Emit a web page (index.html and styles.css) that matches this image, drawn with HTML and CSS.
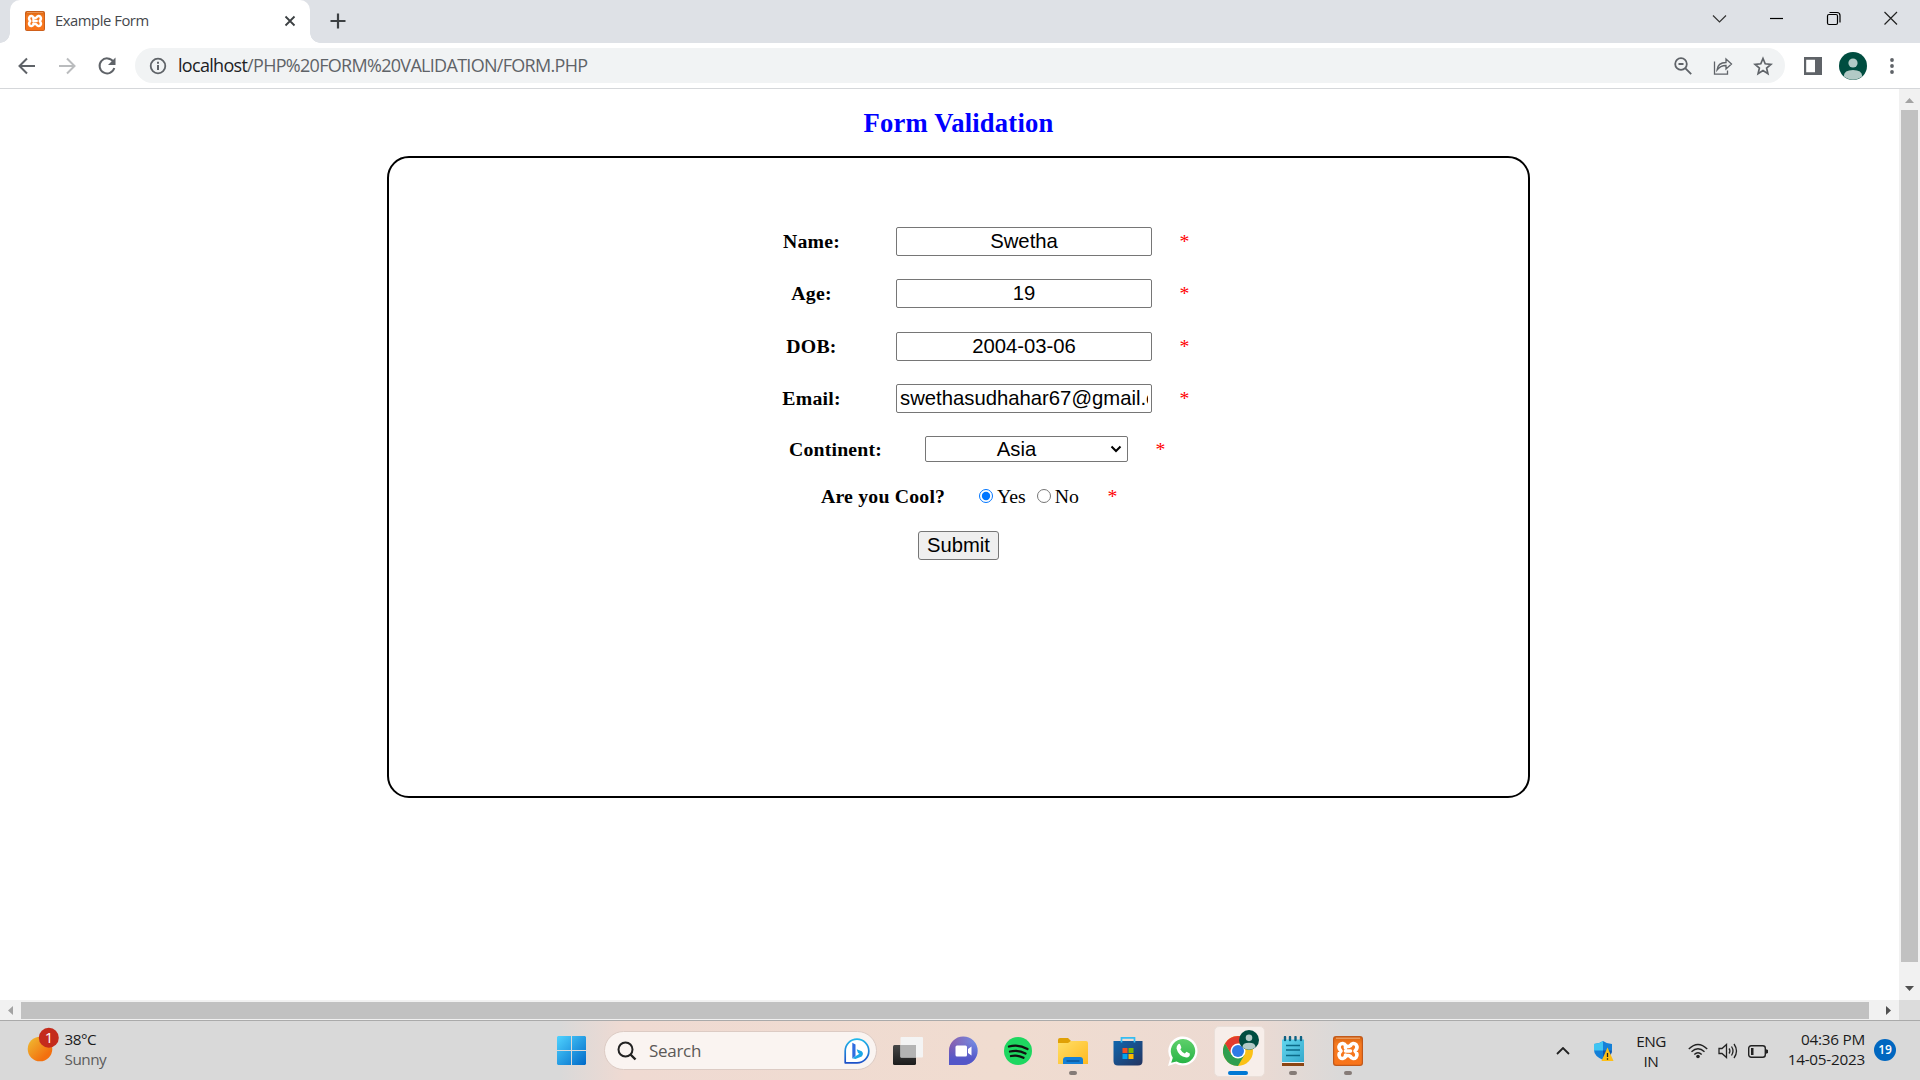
FILE: index.html
```html
<!DOCTYPE html>
<html lang="en">
<head>
<meta charset="utf-8">
<title>Example Form</title>
<link rel="stylesheet" href="styles.css">
</head>
<body>
<svg width="0" height="0" class="defs">
  <defs>
    <linearGradient id="orange" x1="0" y1="0" x2="0" y2="1"><stop offset="0" stop-color="#d9640f"/><stop offset=".25" stop-color="#f57a21"/><stop offset="1" stop-color="#f9741a"/></linearGradient>
    <linearGradient id="win" x1="0" y1="0" x2="1" y2="1"><stop offset="0" stop-color="#4fd3ff"/><stop offset="1" stop-color="#0069c8"/></linearGradient>
    <linearGradient id="sun" x1="0" y1="0" x2="1" y2="1"><stop offset=".1" stop-color="#efb52f"/><stop offset=".75" stop-color="#f3700f"/></linearGradient>
    <linearGradient id="bing" x1="0" y1="0" x2="0" y2="1"><stop offset="0" stop-color="#22b8ea"/><stop offset="1" stop-color="#1c50c8"/></linearGradient>
    <linearGradient id="dark" x1="0" y1="0" x2="0" y2="1"><stop offset="0" stop-color="#484848"/><stop offset="1" stop-color="#1c1c1c"/></linearGradient>
    <linearGradient id="chat" x1="0" y1="0" x2="1" y2="0"><stop offset="0" stop-color="#8b5caa"/><stop offset="1" stop-color="#6f8fe8"/></linearGradient>
    <linearGradient id="chat2" x1="0" y1="0" x2="0" y2="1"><stop offset=".2" stop-color="#5457c8" stop-opacity="0"/><stop offset=".8" stop-color="#5457c8"/></linearGradient>
    <linearGradient id="folder" x1="0" y1="0" x2="1" y2="1"><stop offset="0" stop-color="#ffdf68"/><stop offset="1" stop-color="#ffb91f"/></linearGradient>
    <linearGradient id="store" x1="0" y1="0" x2="1" y2="1"><stop offset="0" stop-color="#0f66ae"/><stop offset="1" stop-color="#243460"/></linearGradient>
    <linearGradient id="wa" x1="0" y1="0" x2="0" y2="1"><stop offset="0" stop-color="#5fd06b"/><stop offset="1" stop-color="#28b446"/></linearGradient>
    <linearGradient id="note" x1="0" y1="0" x2="1" y2="1"><stop offset="0" stop-color="#62d6ee"/><stop offset="1" stop-color="#36a9cc"/></linearGradient>
    <symbol id="xampp" viewBox="0 0 30 30"><rect width="30" height="30" rx="3" fill="#c2591a"/><rect x="1.2" y="1.2" width="27.6" height="27.6" rx="2" fill="url(#orange)"/><path d="M3 2.2h24" stroke="#eeb07f" stroke-width="1"/><path d="M12.500 12V9.500C11.500 7 8.500 7 7 8.500 5.500 10.500 6 13 8 15c-2 2-2.500 4.500-1 6.500 1.500 1.500 4.500 1.500 5.500-1V19M12.500 9.500Q15 11.500 17.500 9.500C18.500 7 21.500 7 23 8.500c1.500 2 1 4.500-1 6.500 2 2 2.500 4.500 1 6.500-1.500 1.500-4.500 1.500-5.500-1Q15 18.500 12.500 20.500M12.500 15h5" fill="none" stroke="#fff" stroke-width="3.600" stroke-linejoin="round" stroke-linecap="round"/></symbol>
    <symbol id="person" viewBox="0 0 28 28"><circle cx="14" cy="14" r="14" fill="#004d40"/><circle cx="14" cy="11" r="4.600" fill="#b2cac6"/><path d="M4.800 24.200Q5 18 14 18t9.200 6.200A14 14 0 0 1 4.800 24.200Z" fill="#b2cac6"/></symbol>
  </defs>
</svg>

<header class="tabstrip">
  <div class="tab">
    <svg class="favicon" width="20" height="20"><use href="#xampp"/></svg>
    <span class="tab-title">Example Form</span>
    <svg class="tab-close" width="12" height="12" viewBox="0 0 12 12"><path d="M1.500 1.500l9 9m0-9l-9 9" stroke="#3c4043" stroke-width="1.800"/></svg>
  </div>
  <svg class="new-tab" width="16" height="16" viewBox="0 0 16 16"><path d="M8 .5v15M.5 8h15" stroke="#3c4043" stroke-width="2.200"/></svg>
  <div class="window-controls">
    <svg width="57" height="36" viewBox="0 0 57 36"><path d="M22 15.500l6.500 6.500 6.500-6.500" fill="none" stroke="#333" stroke-width="1.200"/></svg>
    <svg width="57" height="36" viewBox="0 0 57 36"><path d="M22 18.500h13" stroke="#000" stroke-width="1.200"/></svg>
    <svg width="57" height="36" viewBox="0 0 57 36"><rect x="22.500" y="14.500" width="10" height="10" rx="1.500" fill="none" stroke="#000" stroke-width="1.200"/><path d="M24.500 12.500h7.500a3 3 0 0 1 3 3v7" fill="none" stroke="#000" stroke-width="1.200"/></svg>
    <svg width="57" height="36" viewBox="0 0 57 36"><path d="M22.500 12l12.500 12.500m0-12.500l-12.500 12.500" stroke="#222" stroke-width="1.200"/></svg>
  </div>
</header>

<nav class="toolbar">
  <div class="nav-buttons">
    <svg width="40" height="40" viewBox="0 0 40 40"><path d="M28 20H13m7-7.500L12.500 20l7.500 7.500" fill="none" stroke="#5f6368" stroke-width="2"/></svg>
    <svg width="40" height="40" viewBox="0 0 40 40"><path d="M12 20h15m-7-7.500l7.500 7.500-7.500 7.500" fill="none" stroke="#babcbe" stroke-width="2"/></svg>
    <svg width="40" height="40" viewBox="0 0 40 40"><path d="M26.200 15.500A7.500 7.500 0 1 0 27.300 22" fill="none" stroke="#5f6368" stroke-width="2"/><path d="M28.500 11.500v7.500h-7.500z" fill="#5f6368"/></svg>
  </div>
  <div class="omnibox">
    <svg width="18" height="18" viewBox="0 0 18 18"><circle cx="9" cy="9" r="7.300" fill="none" stroke="#5f6368" stroke-width="1.800"/><path d="M9 8v5M9 4.800v2" stroke="#5f6368" stroke-width="2"/></svg>
    <span class="url"><b>localhost</b>/PHP%20FORM%20VALIDATION/FORM.PHP</span>
    <span class="page-actions">
      <svg width="40" height="36" viewBox="0 0 40 36"><circle cx="18" cy="16" r="5.800" fill="none" stroke="#5f6368" stroke-width="1.800"/><path d="M15.500 16h5M22.200 20.200l6 6" stroke="#5f6368" stroke-width="1.800"/></svg>
      <svg width="40" height="36" viewBox="0 0 40 36"><path d="M11.500 13.500v12.700h13v-3.700M14 22c.5-5 4-7.500 9-7.500V11l5.500 5-5.500 5v-3.500c-4 0-6.500 1-9 4.500z" fill="none" stroke="#5f6368" stroke-width="1.300"/></svg>
      <svg width="40" height="36" viewBox="0 0 40 36"><path d="M20 10.500l2.200 5.300 5.700.5-4.300 3.700 1.300 5.600-4.900-3-4.900 3 1.300-5.600-4.300-3.700 5.700-.5z" fill="none" stroke="#5f6368" stroke-width="1.700"/></svg>
    </span>
  </div>
  <div class="browser-actions">
    <svg width="18" height="18" viewBox="0 0 18 18"><path fill="#5f6368" fill-rule="evenodd" d="M0 0h18v18H0zM2.200 2.800v12.400H11V2.800z"/></svg>
    <svg width="28" height="28"><use href="#person"/></svg>
    <svg width="6" height="18" viewBox="0 0 6 18"><g fill="#5f6368"><circle cx="3" cy="3" r="1.900"/><circle cx="3" cy="9" r="1.900"/><circle cx="3" cy="15" r="1.900"/></g></svg>
  </div>
</nav>

<div class="viewport">
  <main class="page">
    <h1>Form Validation</h1>
    <form class="card">
      <div class="row"><label>Name:</label><input class="field" value="Swetha"><span class="star">*</span></div>
      <div class="row"><label>Age:</label><input class="field" value="19"><span class="star">*</span></div>
      <div class="row"><label>DOB:</label><input class="field" value="2004-03-06"><span class="star">*</span></div>
      <div class="row"><label>Email:</label><input class="field" value="swethasudhahar67@gmail.com"><span class="star">*</span></div>
      <div class="row continent"><label>Continent:</label><div class="select"><select class="field"><option>Asia</option></select><svg width="12" height="8" viewBox="0 0 12 8"><path d="M1.500 1.500L6 6l4.500-4.500" fill="none" stroke="#000" stroke-width="2"/></svg></div><span class="star">*</span></div>
      <div class="row cool"><label>Are you Cool?</label><input type="radio" name="cool" checked><span class="yes">Yes</span><input type="radio" name="cool"><span>No</span><span class="star">*</span></div>
      <button class="submit" type="button">Submit</button>
    </form>
  </main>
  <div class="vbar">
    <svg width="21" height="21" viewBox="0 0 21 21"><path d="M6 14l4.500-5 4.500 5z" fill="#a3a3a3"/></svg>
    <div class="vthumb"></div>
    <svg class="end" width="21" height="21" viewBox="0 0 21 21"><path d="M6 7l4.500 5 4.500-5z" fill="#505050"/></svg>
  </div>
  <div class="hbar">
    <svg width="21" height="20" viewBox="0 0 21 20"><path d="M13 6v9l-5-4.500z" fill="#a3a3a3"/></svg>
    <div class="hthumb"></div>
    <svg class="end" width="21" height="20" viewBox="0 0 21 20"><path d="M8 6v9l5-4.500z" fill="#505050"/></svg>
  </div>
  <div class="corner"></div>
</div>

<footer class="taskbar">
  <div class="weather">
    <svg width="34" height="36" viewBox="0 0 34 36"><circle cx="15" cy="22" r="12.300" fill="url(#sun)"/><circle cx="23.800" cy="10.800" r="10" fill="#c42b1c"/><text x="24" y="16" class="badge-text">1</text></svg>
    <div class="weather-text"><span>38°C</span><span class="muted">Sunny</span></div>
  </div>
  <div class="apps">
    <svg class="start" width="29" height="29" viewBox="0 0 29 29"><path fill="url(#win)" d="M1 0h13v14H0V1zM15 0h13l1 1v13H15zM0 15h14v14H1l-1-1zM15 15h14v13l-1 1H15z"/></svg>
    <div class="search">
      <svg width="20" height="20" viewBox="0 0 20 20"><circle cx="8.500" cy="8.500" r="7" fill="none" stroke="#222" stroke-width="2"/><path d="M13.500 13.500l5 5" stroke="#222" stroke-width="2.400"/></svg>
      <span class="search-text">Search</span>
      <svg class="bing" width="26" height="26" viewBox="0 0 26 26"><path d="M1.200 24.800V13A11.800 11.800 0 1 1 13 24.800z" fill="#fff" stroke="url(#bing)" stroke-width="1.700" stroke-linejoin="round"/><path d="M8.300 4.800l3.200 1.600V18l-3.200 2.400z" fill="#2f6de0"/><path d="M11.500 18.200l4-2.400-1.500-.8-1.300-3.700 5 2q2.500 2.500 0 5.200l-6.300 2.500-3.100-.8z" fill="#1aa7e6"/></svg>
    </div>
    <div class="app"><svg width="30" height="30" viewBox="0 0 30 30"><rect x="0" y="9" width="23" height="20" rx="1.500" fill="url(#dark)"/><rect x="7.500" y="1" width="22.500" height="20.500" rx="1" fill="#f4f4f4"/><path d="M7.500 9H23v12.500H7.500z" fill="#b4b4b4"/></svg></div>
    <div class="app"><svg width="30" height="30" viewBox="0 0 30 30"><path d="M1 29V15A14.300 14.300 0 1 1 15 29z" fill="url(#chat)"/><path d="M1 29V15A14.300 14.300 0 1 1 15 29z" fill="url(#chat2)"/><rect x="7.500" y="9.500" width="11.500" height="11" rx="1.500" fill="#fff"/><path d="M20 13l3.500-2.500v9L20 17z" fill="#fff"/></svg></div>
    <div class="app"><svg width="30" height="30" viewBox="0 0 30 30"><circle cx="15" cy="15" r="14" fill="#1ed760"/><path d="M6 10.500q9.500-2.500 18.500 2.500M7 15.500q8-2 15.500 2M8 20q6.500-1.500 12.500 1.800" fill="none" stroke="#111" stroke-width="2.300" stroke-linecap="round"/></svg></div>
    <div class="app open"><svg width="30" height="30" viewBox="0 0 30 30"><path d="M0 4q0-2 2-2h8l3 3-2 4H0z" fill="#e0a006"/><path d="M0 7h10l3-2h15q2 0 2 2v21H0z" fill="url(#folder)"/><path d="M5 28v-4q0-3 3-3h14q3 0 3 3v4z" fill="#1480d8"/><path d="M8.500 25h13" stroke="#0a4b8c" stroke-width="1.200"/></svg></div>
    <div class="app"><svg width="30" height="30" viewBox="0 0 30 30"><path d="M.5 5h29v20q0 4.500-4.500 4.500H5Q.5 29.500.5 25z" fill="url(#store)"/><path fill="#f25022" d="M9.500 12h5v5h-5z"/><path fill="#7fba00" d="M15.500 12h5v5h-5z"/><path fill="#00a4ef" d="M9.500 18h5v5h-5z"/><path fill="#ffb900" d="M15.500 18h5v5h-5z"/><path d="M8.500 6.500v-4.700h13v4.700" fill="none" stroke="#35bdf2" stroke-width="1.700"/></svg></div>
    <div class="app"><svg width="30" height="30" viewBox="0 0 30 30"><path d="M0 30l2.200-7.800A14.600 14.600 0 1 1 7.500 27.600z" fill="#fff"/><path d="M3.200 26.800l1.600-5A12.200 12.200 0 1 1 8.600 25.500z" fill="url(#wa)"/><path d="M10 8.500q1.500-1.500 2.300.2l1 2.500q.2.800-1 2 1.500 3 4.500 4.300l1.700-1.700 3.300 1.600q.6 3.700-3.500 4Q10.500 20.500 8.500 12.500q0-2.500 1.500-4z" fill="#fff"/></svg></div>
    <div class="app active"><svg width="36" height="36" viewBox="0 0 36 36"><circle cx="15" cy="21" r="15" fill="#fbc116"/><path d="M2 13.500A15 15 0 0 1 28 13.500H15l-6.500 11.200z" fill="#e33b2e"/><path d="M2 13.500A15 15 0 0 0 15 36l6.500-11.200H8.500z" fill="#2f9e4f"/><circle cx="15" cy="21" r="7.500" fill="#fff"/><circle cx="15" cy="21" r="6" fill="#2f7ae5"/><use href="#person" x="16" y="0" width="20" height="20"/></svg></div>
    <div class="app open"><svg width="30" height="30" viewBox="0 0 30 30"><path d="M4 26.500h22V30H4z" fill="#8b4513"/><path d="M4 25h22v2H4z" fill="#eee"/><path d="M4 3.500h22V26H4z" fill="url(#note)"/><path d="M8 9.500h14M8 14h14M8 19.500h14" stroke="#0b6a88" stroke-width="1.600"/><path d="M7 1v3M12 1v3M17.500 1v3M23 1v3" stroke="#0e6283" stroke-width="2.400" stroke-linecap="round"/></svg></div>
    <div class="app open"><svg width="30" height="30"><use href="#xampp"/></svg></div>
  </div>
  <div class="tray">
    <svg width="14" height="8" viewBox="0 0 14 8"><path d="M1 7l6-6 6 6" fill="none" stroke="#222" stroke-width="1.800"/></svg>
    <svg class="shield" width="20" height="20" viewBox="0 0 20 20"><path d="M0 3q5 0 9-3 4 3 9 3v6q0 6-9 10-9-4-9-10z" fill="#1480d8"/><path d="M0 3q5 0 9-3v9.500H0z" fill="#3fc5f3"/><path d="M9 9.500h9q0 6-9 9.500z" fill="#0e55ae"/><path d="M13.500 6.500L19.500 20h-12z" fill="#fdbf17"/><path d="M13.500 12v4M13.500 17.200v1.500" stroke="#222" stroke-width="1.300"/></svg>
    <div class="lang"><span>ENG</span><span>IN</span></div>
    <svg class="wifi" width="20" height="16" viewBox="0 0 20 16"><path d="M.8 6q9.200-9 18.400 0M3.500 8.800q6.500-6 13 0M6.300 11.500q3.700-3.500 7.400 0" fill="none" stroke="#222" stroke-width="1.400"/><circle cx="10" cy="13.500" r="1.800" fill="#222"/></svg>
    <svg class="sound" width="20" height="16" viewBox="0 0 20 16"><path d="M1 5.500h3L8.500 1.500v13L4 10.500H1z" fill="none" stroke="#222" stroke-width="1.300"/><path d="M11 5.500q1.800 2.500 0 5M13.500 3.500q3 4.500 0 9M16 1q5 7 0 14" fill="none" stroke="#222" stroke-width="1.300"/></svg>
    <svg class="battery" width="20" height="13" viewBox="0 0 20 13"><rect x=".7" y=".7" width="16.600" height="11.600" rx="2.500" fill="none" stroke="#222" stroke-width="1.400"/><path d="M3 3h2.500v7H3zM17.500 4l2.500 1v3l-2.500 1z" fill="#222"/></svg>
    <div class="clock"><span>04:36 PM</span><span>14-05-2023</span></div>
    <span class="count">19</span>
  </div>
</footer>
</body>
</html>
```
FILE: styles.css
```css
* { box-sizing: border-box; }
body { margin: 0; width: 1920px; height: 1080px; overflow: hidden; display: flex; flex-direction: column; background: #fff; font-family: "Open Sans", "Noto Sans", sans-serif; }
svg { display: block; flex: none; }
.defs { position: absolute; }

.tabstrip { height: 43px; background: #dee1e6; display: flex; align-items: flex-start; padding-left: 10px; padding-right: 1px; flex: none; }
.tab { width: 300px; height: 43px; background: #fff; border-radius: 10px 10px 0 0; display: flex; align-items: center; padding: 0 14px 2px 15px; position: relative; }
.tab::before, .tab::after { content: ""; position: absolute; bottom: 0; width: 10px; height: 10px; }
.tab::before { left: -10px; background: radial-gradient(circle at 0 0, transparent 9.500px, #fff 10px); }
.tab::after { right: -10px; background: radial-gradient(circle at 100% 0, transparent 9.500px, #fff 10px); }
.tab-title { margin-left: 10px; font-size: 14.800px; padding-bottom: 2px; color: #45484c; letter-spacing: -0.450px; flex: 1; white-space: nowrap; }
.new-tab { margin: 13px 0 0 19.500px; }
.window-controls { margin-left: auto; display: flex; }

.toolbar { height: 46px; border-bottom: 1px solid #d5d7da; display: flex; align-items: center; flex: none; padding-left: 7px; }
.nav-buttons { display: flex; width: 128px; }
.omnibox { width: 1650px; height: 35px; border-radius: 18px; background: #f1f3f4; display: flex; align-items: center; padding-left: 13.500px; }
.url { margin-left: 11.500px; font-size: 18px; line-height: 24px; padding-bottom: 1px; color: #5f6368; letter-spacing: -0.700px; white-space: nowrap; }
.url b { font-weight: 400; color: #202124; }
.page-actions { display: flex; margin-left: auto; padding-right: 2.500px; }
.browser-actions { display: flex; align-items: center; gap: 17.500px; margin-left: 18.500px; }
.browser-actions svg:last-child { margin-left: 4px; }

.viewport { height: 931px; display: grid; grid-template: 911px 20px / 1899px 21px; flex: none; }
.page { display: flex; flex-direction: column; align-items: center; padding-left: 18px; font-family: "Liberation Serif", serif; }
h1 { margin: 19px 0 18px; font-size: 26.600px; line-height: 30px; letter-spacing: 0.200px; color: #00f; }
.card { width: 1143px; height: 642px; border: 2px solid #000; border-radius: 22px; padding-top: 69px; display: flex; flex-direction: column; font-size: 19.800px; }
.row { height: 29px; margin-bottom: 23.400px; padding-left: 372.500px; display: flex; align-items: center; }
.row label { width: 100px; text-align: center; font-weight: 700; letter-spacing: 0.200px; white-space: nowrap; }
.row .field { width: 256px; height: 29px; margin-left: 34.500px; padding: 0 3px; border: 1px solid #767676; border-radius: 2px; background: #fff; color: #000; font: 20.300px "Liberation Sans", sans-serif; text-align: center; }
.star { color: #f00; margin-left: 27.500px; }
.row.continent { height: 26px; margin: -0.400px 0 21px; }
.continent label { width: 129px; padding-left: 19px; }
.select { display: flex; align-items: center; position: relative; }
.select svg { position: absolute; right: 6px; top: 9px; }
.row.continent .field { height: 26px; width: 203px; padding: 0 20px 1px 0; appearance: none; }
.row.cool { height: 26px; margin-bottom: 22px; padding-left: 432px; }
.cool label { width: 124px; margin-right: 34px; }
.cool input { width: 14px; height: 14px; margin: 0 4px 1px 0; }
.cool .yes { margin-right: 11px; }
.cool .star { margin-left: 28.500px; }
.submit { align-self: center; width: 81px; height: 29px; padding: 0 0 1px; border: 1px solid #767676; border-radius: 3px; background: #efefef; color: #000; font: 20.200px "Liberation Sans", sans-serif; }

.vbar { background: #f1f1f1; display: flex; flex-direction: column; }
.vthumb { width: 17px; height: 852px; margin-left: 2px; background: #c1c1c1; }
.hbar { background: #f1f1f1; display: flex; }
.hthumb { width: 1848px; height: 17px; margin-top: 2px; background: #c1c1c1; }
.end { margin-top: auto; margin-left: auto; }
.vbar .end { margin: auto 0 0; }
.corner { background: #dcdcdc; }

.taskbar { height: 60px; border-top: 1px solid #aaa; display: grid; grid-template-columns: 557px 1fr auto; background: linear-gradient(90deg, #d9d9d9 560px, #efdad2 625px, #f0dcd0 1000px, #ecdad2 1250px, #d9d9d9 1345px); color: #1b1b1b; font-size: 15.300px; }
.weather { display: flex; padding: 6px 0 0 25px; }
.badge-text { font-size: 15px; fill: #fff; text-anchor: middle; }
.weather-text { display: flex; flex-direction: column; line-height: 20px; margin: 1.500px 0 0 5.500px; letter-spacing: -0.500px; }
.muted { color: #5c5c5c; }
.apps { display: flex; align-items: center; padding-bottom: 1px; }
.search { width: 273px; height: 39px; margin-left: 18px; margin-right: 3.500px; border: 1px solid #dccbc4; border-radius: 20px; background: #faf4f1; display: flex; align-items: center; padding: 0 6px 0 12px; }
.search-text { margin-left: 12px; font-size: 17px; color: #5c5957; letter-spacing: -0.300px; }
.bing { margin-left: auto; }
.app { width: 55px; height: 59px; display: flex; align-items: center; justify-content: center; position: relative; }
.open::after, .active::after { content: ""; position: absolute; bottom: 5px; height: 4px; border-radius: 2px; width: 8px; background: #857b77; }
.active::after { width: 20px; background: #0078d4; }
.active::before { content: ""; position: absolute; left: 3px; top: 5px; width: 49px; height: 49px; border-radius: 5px; background: #f7eeea; border: 1px solid #eadfd9; }
.active svg { position: relative; left: 3px; top: -3px; }
.tray { display: flex; align-items: center; padding-right: 24px; }
.shield { margin-left: 24px; }
.lang { display: flex; flex-direction: column; align-items: center; line-height: 20px; margin-left: 21px; width: 32px; letter-spacing: -0.500px; padding-bottom: 1px; }
.wifi { margin-left: 21px; }
.sound, .battery { margin-left: 10px; }
.clock { width: 91px; margin-left: 6px; text-align: right; display: flex; flex-direction: column; line-height: 20px; letter-spacing: -0.250px; white-space: nowrap; padding-bottom: 4px; }
.count { width: 22px; height: 22px; border-radius: 50%; background: #0067c0; color: #fff; font-size: 12px; font-weight: 600; line-height: 21px; text-align: center; margin: 0 0 2px 9px; }
```
